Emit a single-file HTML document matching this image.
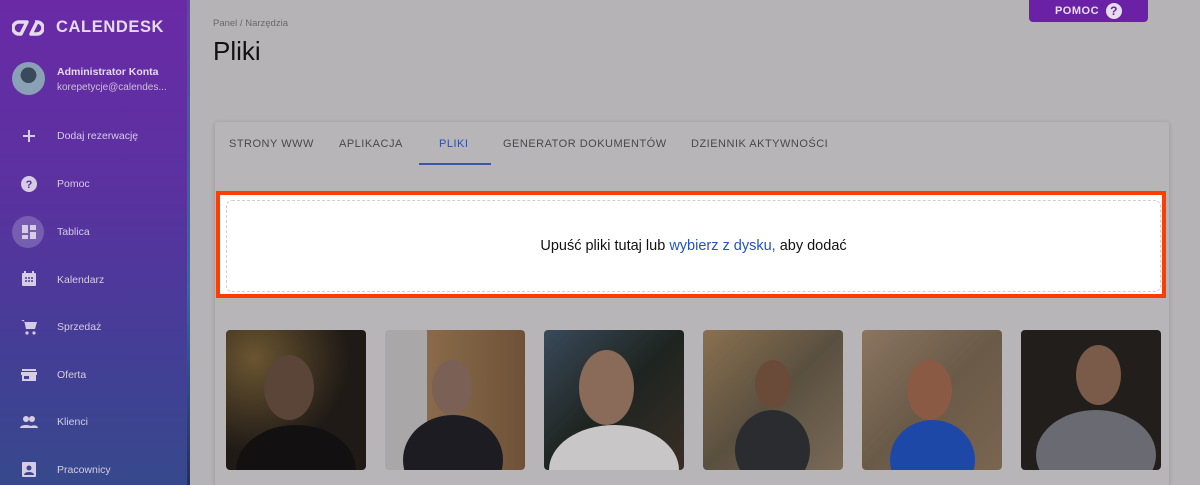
<!DOCTYPE html>
<html><head><meta charset="utf-8"><style>
*{margin:0;padding:0;box-sizing:border-box}
html,body{width:1200px;height:485px;overflow:hidden}
body{font-family:"Liberation Sans",sans-serif;background:#b5b3b6;position:relative}
.wrap{position:absolute;left:0;top:0;width:1200px;height:485px;overflow:hidden}
.sb{position:absolute;left:0;top:0;width:187px;height:485px;background:linear-gradient(180deg,#6a2aa6 0%,#5a32a0 40%,#423f95 75%,#37498c 100%);color:#d9cfe6}
.sbline{position:absolute;left:187px;top:0;width:3px;height:485px;background:linear-gradient(180deg,#5a4a9c,#2f6aa8 60%,#23305e 100%)}
.logo{position:absolute;left:12px;top:18px;display:flex;align-items:center;gap:12px;font-weight:bold;font-size:16.5px;letter-spacing:.6px;color:#e3dbec}
.av{position:absolute;left:12px;top:62px;width:33px;height:33px;border-radius:50%;background:radial-gradient(circle at 50% 40%,#3a4a5a 0 30%,#8aa0b5 31% 100%)}
.nm{position:absolute;left:57px;top:66px;font-size:10.5px;font-weight:bold;color:#e3dbec}
.em{position:absolute;left:57px;top:82px;font-size:10px;color:#cbbfdc}
.it{position:absolute;left:57px;font-size:10.5px;color:#d6cce3}
.ic{position:absolute;left:20px;width:18px;height:18px}
.hl{position:absolute;left:12px;top:216px;width:32px;height:32px;border-radius:50%;background:rgba(255,255,255,.2)}
.crumb{position:absolute;left:213px;top:18px;font-size:9.5px;color:#6a686c}
.h1{position:absolute;left:213px;top:36px;font-size:26px;color:#111}
.btn{position:absolute;left:1029px;top:0;width:119px;height:22px;background:#6a21a6;border-radius:0 0 4px 4px;color:#e6ddf0;font-size:11px;font-weight:bold;letter-spacing:.5px;display:flex;align-items:center;justify-content:center;gap:7px}
.q{width:16px;height:16px;border-radius:50%;background:#e6ddf0;color:#6a21a6;font-size:12px;display:flex;align-items:center;justify-content:center}
.card{position:absolute;left:215px;top:122px;width:954px;height:363px;background:#b7b5b8;box-shadow:0 1px 4px rgba(0,0,0,.2);border-radius:3px 3px 0 0}
.tab{position:absolute;top:138px;font-size:11px;letter-spacing:.5px;color:#4a484c}
.ul{position:absolute;left:419px;top:163px;width:72px;height:2px;background:#3d57a8}
.hi{position:absolute;left:216px;top:191px;width:950px;height:107px;border:4px solid #ff3d00;background:#fff}
.dz{position:absolute;left:226px;top:200px;width:935px;height:92px;border:1.5px dashed #cfcfcf;border-radius:6px;display:flex;align-items:center;justify-content:center;font-size:14.5px;color:#111}
.dz span{color:#2251c8}
.ph{position:absolute;top:330px;width:140px;height:140px;border-radius:4px;overflow:hidden}
.ph i{position:absolute;border-radius:50%}
</style></head><body><div class="wrap">
<div class="sb">
<div class="logo"><svg width="32" height="18" viewBox="0 0 32 18"><path d="M9 3h6l-6 12H7a6 6 0 0 1 0-12z M23 3h2a6 6 0 0 1 0 12h-6l6-12" fill="none" stroke="#e3dbec" stroke-width="3.5" stroke-linejoin="round"/></svg>CALENDESK</div>
<div class="av"></div>
<div class="nm">Administrator Konta</div>
<div class="em">korepetycje@calendes...</div>
<div class="hl"></div>
<svg class="ic" style="top:127px" viewBox="0 0 18 18"><path d="M9 3v12M3 9h12" stroke="#d6cce3" stroke-width="2"/></svg>
<div class="it" style="top:130px">Dodaj rezerwację</div>
<svg class="ic" style="top:175px" viewBox="0 0 18 18"><circle cx="9" cy="9" r="8" fill="#d6cce3"/><text x="9" y="13" font-size="11" font-weight="bold" text-anchor="middle" fill="#5a2e9e" font-family="Liberation Sans">?</text></svg>
<div class="it" style="top:178px">Pomoc</div>
<svg class="ic" style="top:223px" viewBox="0 0 18 18"><path d="M2 2h6v8H2zM10 2h6v5h-6zM2 12h6v4H2zM10 9h6v7h-6z" fill="#d6cce3"/></svg>
<div class="it" style="top:226px">Tablica</div>
<svg class="ic" style="top:270px" viewBox="0 0 18 18"><rect x="2" y="3" width="14" height="13" rx="1" fill="#d6cce3"/><path d="M5 1v3M13 1v3" stroke="#d6cce3" stroke-width="2"/><path d="M5 8h2M8 8h2M11 8h2M5 11h2M8 11h2M11 11h2" stroke="#4d3a9a" stroke-width="1.5"/></svg>
<div class="it" style="top:274px">Kalendarz</div>
<svg class="ic" style="top:318px" viewBox="0 0 18 18"><path d="M1 2h3l2 9h9l2-7H5" fill="#d6cce3"/><circle cx="7" cy="15" r="1.6" fill="#d6cce3"/><circle cx="14" cy="15" r="1.6" fill="#d6cce3"/></svg>
<div class="it" style="top:321px">Sprzedaż</div>
<svg class="ic" style="top:366px" viewBox="0 0 18 18"><path d="M2 3h14v2H2zM1 6h16v3H1zM2 9h14v6H2z" fill="#d6cce3"/><rect x="4" y="10" width="5" height="3" fill="#45429a"/></svg>
<div class="it" style="top:369px">Oferta</div>
<svg class="ic" style="top:413px" viewBox="0 0 18 18"><circle cx="6" cy="6" r="3" fill="#d6cce3"/><circle cx="12" cy="6" r="3" fill="#d6cce3"/><path d="M0 15c0-4 12-4 12 0zM9 15c0-3 9-4 9 0z" fill="#d6cce3"/></svg>
<div class="it" style="top:416px">Klienci</div>
<svg class="ic" style="top:460px" viewBox="0 0 18 18"><rect x="2" y="2" width="14" height="15" rx="1" fill="#d6cce3"/><circle cx="9" cy="8" r="2.5" fill="#3b478e"/><path d="M4 15c0-4 10-4 10 0z" fill="#3b478e"/></svg>
<div class="it" style="top:464px">Pracownicy</div>
</div>
<div class="sbline"></div>
<div class="crumb">Panel / Narzędzia</div>
<div class="h1">Pliki</div>
<div class="btn">POMOC <div class="q">?</div></div>
<div class="card"></div>
<div class="tab" style="left:229px">STRONY WWW</div>
<div class="tab" style="left:339px">APLIKACJA</div>
<div class="tab" style="left:439px;color:#2d4fa8">PLIKI</div>
<div class="tab" style="left:503px">GENERATOR DOKUMENTÓW</div>
<div class="tab" style="left:691px">DZIENNIK AKTYWNOŚCI</div>
<div class="ul"></div>
<div class="hi"></div>
<div class="dz">Upuść pliki tutaj lub&nbsp;<span>wybierz z dysku,</span>&nbsp;aby dodać</div>
<div class="ph" style="left:226px;background:radial-gradient(circle at 20% 20%,#6a5530,#1f1a16 60%)"><i style="left:38px;top:25px;width:50px;height:65px;background:#5a4538"></i><i style="left:10px;top:95px;width:120px;height:90px;background:#121010"></i></div>
<div class="ph" style="left:385px;background:linear-gradient(90deg,#a9a7a8 0 30%,#8a6a4a 30%,#6e5238)"><i style="left:47px;top:30px;width:40px;height:55px;background:#7a6055"></i><i style="left:18px;top:85px;width:100px;height:90px;background:#1d1c22"></i></div>
<div class="ph" style="left:544px;background:linear-gradient(135deg,#3a4a5a,#1e2420 50%,#3a2e26)"><i style="left:35px;top:20px;width:55px;height:75px;background:#8a6a58"></i><i style="left:5px;top:95px;width:130px;height:90px;background:#c8c6c6"></i></div>
<div class="ph" style="left:703px;background:linear-gradient(135deg,#8a7050,#5a5040 50%,#7a6a58)"><i style="left:52px;top:30px;width:36px;height:48px;background:#6a4a38"></i><i style="left:32px;top:80px;width:75px;height:80px;background:#2a2c30"></i></div>
<div class="ph" style="left:862px;background:linear-gradient(135deg,#8a7560,#6a5a48 50%,#7a6550)"><i style="left:45px;top:30px;width:45px;height:60px;background:#8a5a44"></i><i style="left:28px;top:90px;width:85px;height:80px;background:#1e48a8"></i></div>
<div class="ph" style="left:1021px;background:#221e1c"><i style="left:55px;top:15px;width:45px;height:60px;background:#7a5a48"></i><i style="left:15px;top:80px;width:120px;height:90px;background:#6a6a72"></i></div>
</div></body></html>
